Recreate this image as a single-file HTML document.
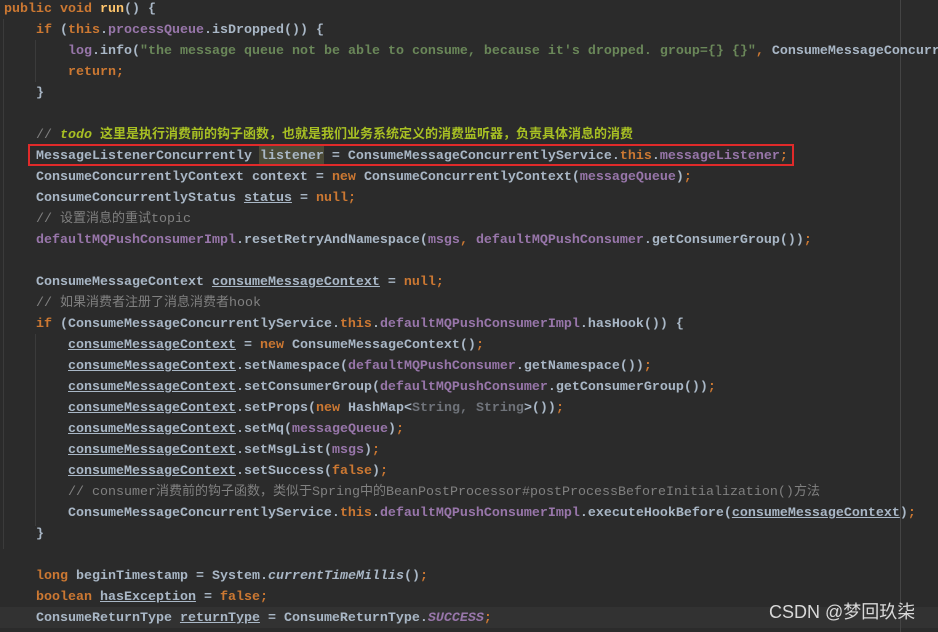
<!DOCTYPE html>
<html><head><meta charset="utf-8"><style>
html,body{margin:0;width:938px;height:632px;overflow:hidden}
body{background:#2b2b2b;font-family:"Liberation Mono","Noto Sans CJK SC",monospace;font-size:13.33px;color:#a9b7c6}
#w{position:relative;width:938px;height:632px;overflow:hidden}
.l{position:absolute;left:4px;height:21px;line-height:21px;white-space:pre;font-weight:bold}
.k{color:#cc7832}.f{color:#9876aa}.s{color:#6a8759}.c{color:#808080;font-weight:normal}.m{color:#ffc66d}
.u{text-decoration:underline;text-decoration-color:#a9b7c6}.i{font-style:italic}.g{color:#6f737a}
.t{color:#a8c023;font-style:italic}.tc{color:#a8c023}
.cj{font-family:"Noto Sans CJK SC",sans-serif;font-size:13px;line-height:0}
.vg{position:absolute;width:1px;background:#3b3b3b}
</style></head><body><div id="w">
<div style="position:absolute;left:0;top:607px;width:938px;height:21px;background:#323232"></div>
<div style="position:absolute;left:900px;top:0;width:1px;height:632px;background:#444"></div>
<div class="vg" style="left:3px;top:19px;height:530px"></div>
<div class="vg" style="left:35px;top:40px;height:42px"></div>
<div class="vg" style="left:35px;top:334px;height:192px"></div>
<div style="position:absolute;left:259px;top:145px;width:65px;height:21px;background:#4b4a37"></div>
<div style="position:absolute;left:28px;top:144px;width:766px;height:22px;border:2px solid #e02a2a;box-sizing:border-box"></div>
<div class="l" style="top:-1px"><span class="k">public void </span><span class="m">run</span>() {</div>
<div class="l" style="top:20px">    <span class="k">if </span>(<span class="k">this</span>.<span class="f">processQueue</span>.isDropped()) {</div>
<div class="l" style="top:41px">        <span class="f">log</span>.info(<span class="s">"the message queue not be able to consume, because it's dropped. group={} {}"</span><span class="k">, </span>ConsumeMessageConcurr</div>
<div class="l" style="top:62px">        <span class="k">return;</span></div>
<div class="l" style="top:83px">    }</div>
<div class="l" style="top:125px">    <span class="c">// </span><span class="t">todo </span><span class="tc cj">这里是执行消费前的钩子函数，也就是我们业务系统定义的消费监听器，负责具体消息的消费</span></div>
<div class="l" style="top:146px">    MessageListenerConcurrently listener = ConsumeMessageConcurrentlyService.<span class="k">this</span>.<span class="f">messageListener</span><span class="k">;</span></div>
<div class="l" style="top:167px">    ConsumeConcurrentlyContext context = <span class="k">new </span>ConsumeConcurrentlyContext(<span class="f">messageQueue</span>)<span class="k">;</span></div>
<div class="l" style="top:188px">    ConsumeConcurrentlyStatus <span class="u">status</span> = <span class="k">null;</span></div>
<div class="l" style="top:209px">    <span class="c">// <span class="cj">设置消息的重试</span>topic</span></div>
<div class="l" style="top:230px">    <span class="f">defaultMQPushConsumerImpl</span>.resetRetryAndNamespace(<span class="f">msgs</span><span class="k">, </span><span class="f">defaultMQPushConsumer</span>.getConsumerGroup())<span class="k">;</span></div>
<div class="l" style="top:272px">    ConsumeMessageContext <span class="u">consumeMessageContext</span> = <span class="k">null;</span></div>
<div class="l" style="top:293px">    <span class="c">// <span class="cj">如果消费者注册了消息消费者</span>hook</span></div>
<div class="l" style="top:314px">    <span class="k">if </span>(ConsumeMessageConcurrentlyService.<span class="k">this</span>.<span class="f">defaultMQPushConsumerImpl</span>.hasHook()) {</div>
<div class="l" style="top:335px">        <span class="u">consumeMessageContext</span> = <span class="k">new </span>ConsumeMessageContext()<span class="k">;</span></div>
<div class="l" style="top:356px">        <span class="u">consumeMessageContext</span>.setNamespace(<span class="f">defaultMQPushConsumer</span>.getNamespace())<span class="k">;</span></div>
<div class="l" style="top:377px">        <span class="u">consumeMessageContext</span>.setConsumerGroup(<span class="f">defaultMQPushConsumer</span>.getConsumerGroup())<span class="k">;</span></div>
<div class="l" style="top:398px">        <span class="u">consumeMessageContext</span>.setProps(<span class="k">new </span>HashMap&lt;<span class="g">String, String</span>&gt;())<span class="k">;</span></div>
<div class="l" style="top:419px">        <span class="u">consumeMessageContext</span>.setMq(<span class="f">messageQueue</span>)<span class="k">;</span></div>
<div class="l" style="top:440px">        <span class="u">consumeMessageContext</span>.setMsgList(<span class="f">msgs</span>)<span class="k">;</span></div>
<div class="l" style="top:461px">        <span class="u">consumeMessageContext</span>.setSuccess(<span class="k">false</span>)<span class="k">;</span></div>
<div class="l" style="top:482px">        <span class="c">// consumer<span class="cj">消费前的钩子函数，类似于</span>Spring<span class="cj">中的</span>BeanPostProcessor#postProcessBeforeInitialization()<span class="cj">方法</span></span></div>
<div class="l" style="top:503px">        ConsumeMessageConcurrentlyService.<span class="k">this</span>.<span class="f">defaultMQPushConsumerImpl</span>.executeHookBefore(<span class="u">consumeMessageContext</span>)<span class="k">;</span></div>
<div class="l" style="top:524px">    }</div>
<div class="l" style="top:566px">    <span class="k">long </span>beginTimestamp = System.<span class="i">currentTimeMillis</span>()<span class="k">;</span></div>
<div class="l" style="top:587px">    <span class="k">boolean </span><span class="u">hasException</span> = <span class="k">false;</span></div>
<div class="l" style="top:608px">    ConsumeReturnType <span class="u">returnType</span> = ConsumeReturnType.<span class="f i">SUCCESS</span><span class="k">;</span></div>
<div style="position:absolute;left:769px;top:600px;font-family:'Liberation Sans','Noto Sans CJK SC',sans-serif;font-size:18px;color:#d8d8d8;line-height:24px">CSDN @梦回玖柒</div>
</div></body></html>
